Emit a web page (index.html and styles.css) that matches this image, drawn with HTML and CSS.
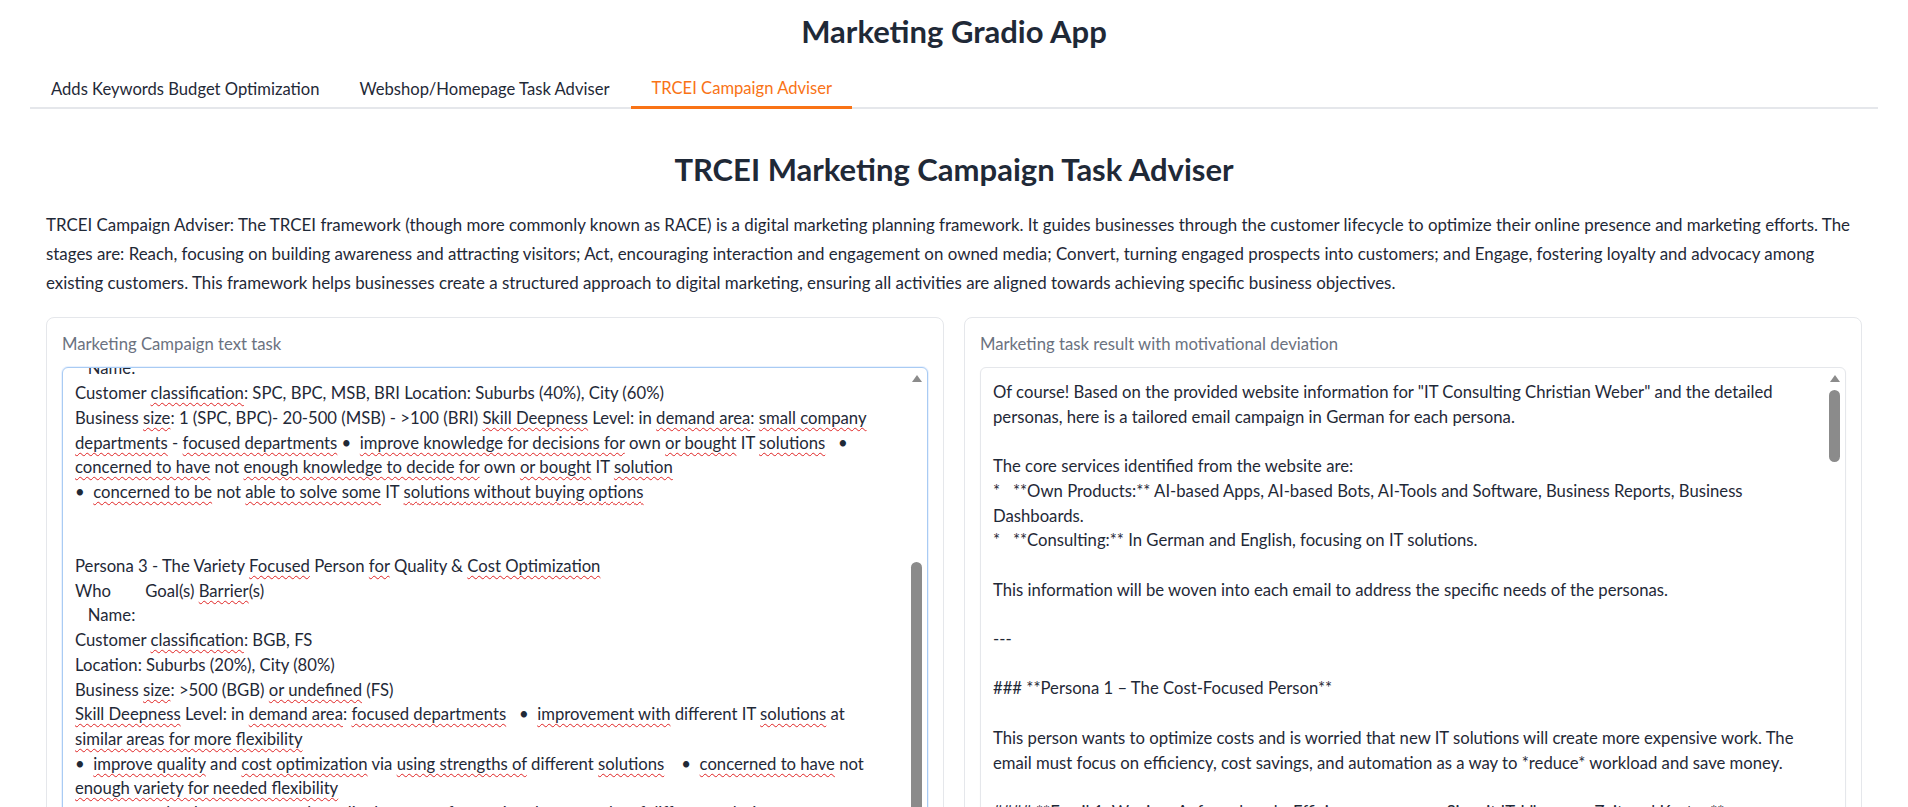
FILE: index.html
```html
<!DOCTYPE html>
<html lang="en">
<head>
    <meta charset="UTF-8">
    <meta name="viewport" content="width=device-width, initial-scale=1.0">
    <title>Marketing Gradio App</title>
    <link rel="stylesheet" href="styles.css">
</head>
<body>
    <div class="app">
        <h1 class="app-title">Marketing Gradio App</h1>

        <div class="tabs">
            <button class="tab">Adds Keywords Budget Optimization</button>
            <button class="tab">Webshop/Homepage Task Adviser</button>
            <button class="tab active">TRCEI Campaign Adviser</button>
        </div>

        <div class="tab-content">
            <h2 class="page-heading">TRCEI Marketing Campaign Task Adviser</h2>
            <p class="intro">TRCEI Campaign Adviser: The TRCEI framework (though more commonly known as RACE) is a digital marketing planning framework. It guides businesses through the customer lifecycle to optimize their online presence and marketing efforts. The stages are: Reach, focusing on building awareness and attracting visitors; Act, encouraging interaction and engagement on owned media; Convert, turning engaged prospects into customers; and Engage, fostering loyalty and advocacy among existing customers. This framework helps businesses create a structured approach to digital marketing, ensuring all activities are aligned towards achieving specific business objectives.</p>

            <div class="panels">
                <div class="panel">
                    <label class="panel-label">Marketing Campaign text task</label>
                    <div class="textbox focused">
                        <div class="textbox-text" id="task-input">Persona 2 - The Knowledge Focused Person for Own or Bought Solutions
Who        Goal(s) <span class="sp">Barrier(s)</span>
   Name:
Customer <span class="sp">classification</span>: SPC, BPC, MSB, BRI Location: Suburbs (40%), City (60%)
Business <span class="sp">size</span>: 1 (SPC, BPC)- 20-500 (MSB) - &gt;100 (BRI) <span class="sp">Skill Deepness</span> Level: in <span class="sp">demand area</span>: <span class="sp">small company</span>
<span class="sp">departments</span> - <span class="sp">focused departments</span> •  <span class="sp">improve knowledge for decisions for</span> own <span class="sp">or bought</span> IT <span class="sp">solutions</span>   •
<span class="sp">concerned to have</span> not <span class="sp">enough knowledge to decide for</span> own <span class="sp">or bought</span> IT <span class="sp">solution</span>
•  <span class="sp">concerned to be</span> not <span class="sp">able to solve some</span> IT <span class="sp">solutions without buying options</span>


Persona 3 - The Variety <span class="sp">Focused</span> Person <span class="sp">for</span> Quality &amp; <span class="sp">Cost Optimization</span>
Who        Goal(s) <span class="sp">Barrier</span>(s)
   Name:
Customer <span class="sp">classification</span>: BGB, FS
Location: Suburbs (20%), City (80%)
Business <span class="sp">size</span>: &gt;500 (BGB) <span class="sp">or undefined</span> (FS)
<span class="sp">Skill Deepness</span> Level: in <span class="sp">demand area</span>: <span class="sp">focused departments</span>   •  <span class="sp">improvement with</span> different IT <span class="sp">solutions</span> at
<span class="sp">similar areas for more flexibility</span>
•  <span class="sp">improve quality</span> and <span class="sp">cost optimization</span> via <span class="sp">using strengths of</span> different <span class="sp">solutions</span>    •  <span class="sp">concerned to have</span> not
<span class="sp">enough variety for needed flexibility</span>
•  <span class="sp">concerned to have</span> not <span class="sp">enough quality because of</span> not <span class="sp">using the strengths of</span> different <span class="sp">solutions</span>
</div>
                        <span class="scroll-arrow"></span>
                        <span class="scroll-thumb low"></span>
                    </div>
                </div>

                <div class="panel">
                    <label class="panel-label">Marketing task result with motivational deviation</label>
                    <div class="textbox">
                        <div class="textbox-text">Of course! Based on the provided website information for "IT Consulting Christian Weber" and the detailed
personas, here is a tailored email campaign in German for each persona.

The core services identified from the website are:
*   **Own Products:** AI-based Apps, AI-based Bots, AI-Tools and Software, Business Reports, Business
Dashboards.
*   **Consulting:** In German and English, focusing on IT solutions.

This information will be woven into each email to address the specific needs of the personas.

---

### **Persona 1 – The Cost-Focused Person**

This person wants to optimize costs and is worried that new IT solutions will create more expensive work. The
email must focus on efficiency, cost savings, and automation as a way to *reduce* workload and save money.

#### **Email 1: Weniger Aufwand, mehr Effizienz – so sparen Sie mit IT-Lösungen Zeit und Kosten**</div>
                        <span class="scroll-arrow"></span>
                        <span class="scroll-thumb"></span>
                    </div>
                </div>
            </div>
        </div>
    </div>

    <script>
        // the input box is scrolled down to the middle of persona 2
        document.getElementById('task-input').scrollTop = 73;
    </script>
</body>
</html>
```
FILE: styles.css
```css
* {
    margin: 0;
    padding: 0;
    box-sizing: border-box;
}

html, body {
    overflow: hidden;
}

body {
    font-family: Lato, "Liberation Sans", sans-serif;
    color: #1f2937;
    background-color: #fff;
}

.app {
    padding: 0 30px;
}

.app-title {
    padding-top: 11px;
    text-align: center;
    font-size: 31px;
    font-weight: 700;
    line-height: 40px;
    color: #1f2937;
}

.tabs {
    display: flex;
    margin-top: 19px;
    padding-left: 1px;
    border-bottom: 2px solid #e5e7eb;
}

.tab {
    height: 37px;
    padding: 0 20px;
    border: none;
    background: none;
    font-family: inherit;
    font-size: 16.6px;
    line-height: 36px;
    color: #1f2937;
    cursor: pointer;
}

.tab.active {
    height: 39px;
    margin-left: 2px;
    margin-bottom: -2px;
    border-bottom: 3px solid #f97316;
    color: #f97316;
}

.tab-content {
    padding: 0 16px;
}

.page-heading {
    margin-top: 40px;
    text-align: center;
    font-size: 31px;
    font-weight: 700;
    line-height: 40px;
}

.intro {
    margin-top: 21px;
    font-size: 16.9px;
    line-height: 29px;
}

.panels {
    display: flex;
    gap: 20px;
    margin-top: 20px;
}

.panel {
    flex: 1;
    height: 520px;
    padding: 15px 15px 0;
    border: 1px solid #e5e7eb;
    border-radius: 8px;
    background-color: #fff;
}

.panel-label {
    display: block;
    margin-bottom: 12px;
    font-size: 16.7px;
    line-height: 22px;
    color: #6b7280;
}

.textbox {
    position: relative;
    height: 450px;
    border: 1px solid #e5e7eb;
    border-radius: 6px;
    background-color: #fff;
    box-shadow: 0 1px 2px rgba(0, 0, 0, 0.04);
}

.textbox.focused {
    border-color: #a9cbf3;
    box-shadow: 0 0 0 1px rgba(191, 219, 254, 0.35);
}

.textbox-text {
    height: 100%;
    padding: 12px 30px 12px 12px;
    overflow: hidden;
    white-space: pre;
    font-size: 16.7px;
    line-height: 24.7px;
    color: #1f2937;
}

.sp {
    text-decoration: underline wavy #e02424;
    text-decoration-thickness: 1px;
    text-underline-offset: 3px;
    text-decoration-skip-ink: none;
}

.scroll-arrow {
    position: absolute;
    top: 7px;
    right: 5px;
    width: 0;
    height: 0;
    border-left: 5.5px solid transparent;
    border-right: 5.5px solid transparent;
    border-bottom: 7px solid #8b8b8b;
}

.scroll-thumb {
    position: absolute;
    top: 22px;
    right: 5px;
    width: 11px;
    height: 72px;
    border-radius: 6px;
    background-color: #8b8b8b;
}

.scroll-thumb.low {
    top: 194px;
    height: 250px;
}
```
